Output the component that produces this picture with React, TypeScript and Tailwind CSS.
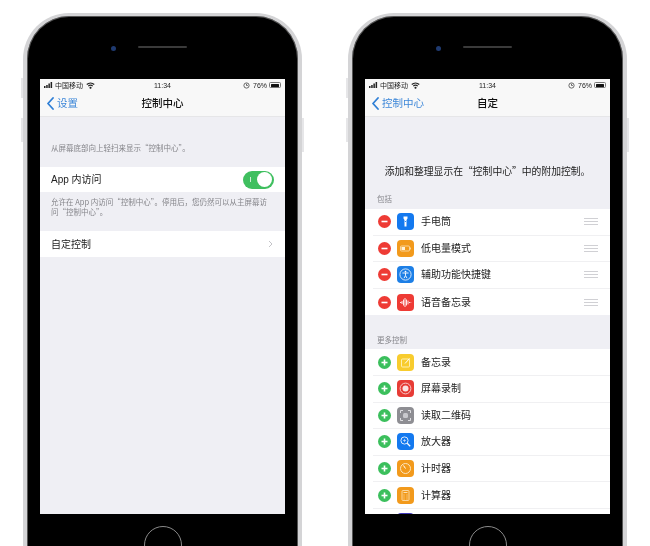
import type { ReactNode } from 'react';

const font = "font-['Liberation_Sans','Noto_Sans_CJK_SC',sans-serif]";
const cjk = "font-['Noto_Sans_CJK_SC',sans-serif]";

function StatusBar() {
  return (
    <div className="flex h-[12px] items-center justify-between bg-[#f8f8f8] pl-[4px] pr-[4px] text-[7px] leading-none text-[#222]">
      <div className="flex w-[70px] items-center gap-[2px]">
        <svg width="9" height="6" viewBox="0 0 9 6" fill="#222">
          <rect x="0" y="4" width="1.5" height="2" />
          <rect x="2.2" y="3" width="1.5" height="3" />
          <rect x="4.4" y="1.5" width="1.5" height="4.5" />
          <rect x="6.6" y="0" width="1.5" height="6" />
        </svg>
        <span>中国移动</span>
        <svg width="9" height="7" viewBox="0 0 12 9" fill="none" stroke="#222" strokeWidth="1.5" className="ml-[1px]">
          <path d="M1 3.2a7.4 7.4 0 0 1 10 0M3 5.3a4.4 4.4 0 0 1 6 0" />
          <circle cx="6" cy="7.5" r="0.7" fill="#222" />
        </svg>
      </div>
      <span>11:34</span>
      <div className="flex w-[70px] items-center justify-end gap-[2px]">
        <svg width="7" height="7" viewBox="0 0 8 8" fill="none" stroke="#555" strokeWidth="1" className="mr-[1px]">
          <circle cx="4" cy="4" r="3" />
          <path d="M4 2v2h1.5" />
        </svg>
        <span>76%</span>
        <span className="flex h-[6px] w-[12px] items-center rounded-[1.5px] border-[0.5px] border-[#777] p-[0.5px]">
          <span className="h-full w-[8px] rounded-[0.5px] bg-[#111]" />
        </span>
      </div>
    </div>
  );
}

function NavBar({ back, title }: { back: string; title: string }) {
  return (
    <div className="relative flex h-[26px] items-center justify-center border-b border-[#e6e6e8] bg-[#f8f8f8]">
      <div className="absolute left-[7px] flex items-center gap-[3px] text-[10.5px] text-[#3d87d8]">
        <svg width="7" height="13" viewBox="0 0 7 13" fill="none" stroke="#2f7fd6" strokeWidth="1.8" strokeLinecap="round" strokeLinejoin="round">
          <path d="M6 1 1 6.5 6 12" />
        </svg>
        <span>{back}</span>
      </div>
      <span className="text-[10.5px] font-medium text-[#111]">{title}</span>
    </div>
  );
}

function Round({ add }: { add?: boolean }) {
  return (
    <span className={`flex h-[13px] w-[13px] shrink-0 items-center justify-center rounded-full ${add ? 'bg-[#3bbf5c]' : 'bg-[#ee3b35]'}`}>
      <svg width="9" height="9" viewBox="0 0 9 9" stroke="#fff" strokeWidth="1.6">
        <path d="M1.5 4.5h6" />
        {add && <path d="M4.5 1.5v6" />}
      </svg>
    </span>
  );
}

function Tile({ color, children }: { color: string; children: ReactNode }) {
  return (
    <span className={`flex h-[17px] w-[17px] shrink-0 items-center justify-center rounded-[4px] ${color}`}>
      <svg width="13" height="13" viewBox="0 0 13 13" fill="none">
        {children}
      </svg>
    </span>
  );
}

const tiles: Record<string, ReactNode> = {
  torch: (
    <Tile color="bg-[#1479ef]">
      <path d="M4.5 1.5h4v2l-1 1.5V11.5h-2V5l-1-1.5z" fill="#fff" />
      <circle cx="6.5" cy="6.5" r="0.6" fill="#1479ef" />
    </Tile>
  ),
  battery: (
    <Tile color="bg-[#f29a1c]">
      <rect x="1.5" y="4" width="9" height="5" rx="1" stroke="#fbe3b8" strokeWidth="0.8" />
      <rect x="2.5" y="5" width="3.5" height="3" fill="#fff3da" />
      <rect x="11" y="5.5" width="0.8" height="2" fill="#fbe3b8" />
    </Tile>
  ),
  access: (
    <Tile color="bg-[#1d7fe6]">
      <circle cx="6.5" cy="6.5" r="5.6" stroke="#fff" strokeWidth="0.8" />
      <circle cx="6.5" cy="3.6" r="0.9" fill="#fff" />
      <path d="M3.4 5h6.2M6.5 5v2.6M6.5 7.6 5 10.2M6.5 7.6 8 10.2" stroke="#fff" strokeWidth="0.9" />
    </Tile>
  ),
  voice: (
    <Tile color="bg-[#ee3b35]">
      <path d="M1 6.5h1.5M3 5v3M4.5 3.5v6M6 2v9M7.5 3.5v6M9 4.6v3.8M10.5 6v1M11.6 6.5h.6" stroke="#fff" strokeWidth="0.9" />
    </Tile>
  ),
  notes: (
    <Tile color="bg-[#f8cc2e]">
      <rect x="2.5" y="3" width="8" height="8" rx="1" stroke="#fff3c0" strokeWidth="0.9" />
      <path d="M6 7.5 10.5 2.5" stroke="#fff" strokeWidth="1" />
    </Tile>
  ),
  record: (
    <Tile color="bg-[#e73c36]">
      <circle cx="6.5" cy="6.5" r="5.4" stroke="#f8c8c6" strokeWidth="1" />
      <circle cx="6.5" cy="6.5" r="3" fill="#fbe4e3" />
    </Tile>
  ),
  qr: (
    <Tile color="bg-[#8e8e93]">
      <path d="M1.5 4V1.5H4M9 1.5h2.5V4M11.5 9v2.5H9M4 11.5H1.5V9" stroke="#e8e8ea" strokeWidth="0.9" />
      <rect x="4" y="4" width="5" height="5" rx="1.5" fill="#c9c9cd" />
    </Tile>
  ),
  zoom: (
    <Tile color="bg-[#1479ef]">
      <circle cx="5.5" cy="5.5" r="3.6" stroke="#dcebfd" strokeWidth="1" />
      <path d="M8.2 8.2 11.2 11.2" stroke="#fff" strokeWidth="1.3" />
      <path d="M4 5.5h3M5.5 4v3" stroke="#dcebfd" strokeWidth="0.6" />
    </Tile>
  ),
  timer: (
    <Tile color="bg-[#f29a1c]">
      <circle cx="6.5" cy="6.5" r="5" stroke="#fde6bf" strokeWidth="1" />
      <path d="M6.5 6.5 4.5 3.5" stroke="#fff" strokeWidth="1" />
    </Tile>
  ),
  calc: (
    <Tile color="bg-[#f29a1c]">
      <rect x="3" y="1.5" width="7" height="10" rx="1" stroke="#fde6bf" strokeWidth="0.8" />
      <path d="M4.5 3.5h4M4.5 6h1M7.5 6h1M4.5 8h1M7.5 8h1M4.5 10h1M7.5 10h1" stroke="#fde6bf" strokeWidth="0.9" />
    </Tile>
  ),
};

function ControlRow({ icon, label, add, last }: { icon: string; label: string; add?: boolean; last?: boolean }) {
  return (
    <div className="h-[26.6px] pl-[8px]">
      <div className={`flex h-full items-center pl-[5px] pr-[12px] ${last ? '' : 'border-b border-[#f0f0f2]'}`}>
        <Round add={add} />
        <span className="ml-[6px]">{tiles[icon]}</span>
        <span className="ml-[7px] flex-1 text-[10px] text-[#222]">{label}</span>
        {!add && (
          <span className="flex w-[14px] flex-col gap-[2px]">
            <span className="h-px bg-[#d0d0d4]" />
            <span className="h-px bg-[#d0d0d4]" />
            <span className="h-px bg-[#d0d0d4]" />
          </span>
        )}
      </div>
    </div>
  );
}

function SettingsScreen() {
  return (
    <>
      <StatusBar />
      <NavBar back="设置" title="控制中心" />
      <div className={`px-[11px] pt-[26px] text-[7.5px] leading-[10px] text-[#85858a] ${cjk}`}>从屏幕底部向上轻扫来显示“控制中心”。</div>
      <div className="mt-[14px] flex h-[25px] items-center justify-between bg-white pl-[11px] pr-[11px] text-[10px] text-[#222]">
        <span>App 内访问</span>
        <span className="flex h-[18px] w-[31px] items-center justify-between rounded-full bg-[#3fbf5f] p-[2px] pl-[7px]">
          <span className="h-[5px] w-px bg-[#cdeed6]" />
          <span className="h-[15px] w-[15px] rounded-full bg-white" />
        </span>
      </div>
      <div className={`px-[11px] pt-[5px] text-[7.5px] leading-[10px] text-[#85858a] ${cjk}`}>
        允许在 App 内访问“控制中心”。停用后，您仍然可以从主屏幕访问“控制中心”。
      </div>
      <div className="mt-[14px] flex h-[26px] items-center justify-between bg-white pl-[11px] pr-[12px] text-[10px] text-[#222]">
        <span>自定控制</span>
        <svg width="5" height="8" viewBox="0 0 5 8" fill="none" stroke="#c4c4c8" strokeWidth="1">
          <path d="M1 1l3 3-3 3" />
        </svg>
      </div>
    </>
  );
}

function CustomizeScreen() {
  return (
    <>
      <StatusBar />
      <NavBar back="控制中心" title="自定" />
      <div className={`pt-[47px] text-center text-[9.8px] leading-[14px] text-[#222] ${cjk}`}>添加和整理显示在“控制中心”中的附加控制。</div>
      <div className="px-[12px] pt-[17px] text-[7.5px] leading-[10px] text-[#85858a]">包括</div>
      <div className="mt-[4px] bg-white">
        <ControlRow icon="torch" label="手电筒" />
        <ControlRow icon="battery" label="低电量模式" />
        <ControlRow icon="access" label="辅助功能快捷键" />
        <ControlRow icon="voice" label="语音备忘录" last />
      </div>
      <div className="px-[12px] pt-[21px] text-[7.5px] leading-[10px] text-[#85858a]">更多控制</div>
      <div className="mt-[3px] bg-white">
        <ControlRow icon="notes" label="备忘录" add />
        <ControlRow icon="record" label="屏幕录制" add />
        <ControlRow icon="qr" label="读取二维码" add />
        <ControlRow icon="zoom" label="放大器" add />
        <ControlRow icon="timer" label="计时器" add />
        <ControlRow icon="calc" label="计算器" add />
        <div className="flex h-[26px] pl-[32px] pt-[4px]">
          <span className="h-[17px] w-[17px] rounded-[4px] bg-[#3f38b8]" />
        </div>
      </div>
    </>
  );
}

function Phone({ children }: { children: ReactNode }) {
  return (
    <div className="relative h-[560px] w-[279px] rounded-t-[46px] border-x-[4px] border-t-[3px] border-[#d4d4d6] bg-black shadow-[inset_0_0_0_1px_#555]">
      <span className="absolute -left-[6px] top-[62px] h-[20px] w-[2px] bg-[#e6e6e8]" />
      <span className="absolute -left-[6px] top-[102px] h-[24px] w-[2px] bg-[#e6e6e8]" />
      <span className="absolute -right-[6px] top-[102px] h-[34px] w-[2px] bg-[#e6e6e8]" />
      <div className="h-[28px]" />
      <div className="relative flex h-[35px] items-start justify-center pt-[2px]">
        <span className="absolute left-[84px] top-[2px] h-[5px] w-[5px] rounded-full bg-[#1f3a70]" />
        <span className="h-[2px] w-[49px] rounded-full bg-[#3a3a3a]" />
      </div>
      <div className="mx-[13px] h-[435px] overflow-hidden bg-[#efeff4]">{children}</div>
      <div className="mx-auto mt-[12px] h-[38px] w-[38px] rounded-full border border-[#8a8a8a]" />
    </div>
  );
}

export default function App() {
  return (
    <div className={`flex h-[546px] w-[650px] gap-[46px] overflow-hidden bg-white pl-[23px] pt-[13px] blur-[0.3px] ${font}`}>
      <Phone>
        <SettingsScreen />
      </Phone>
      <Phone>
        <CustomizeScreen />
      </Phone>
    </div>
  );
}
